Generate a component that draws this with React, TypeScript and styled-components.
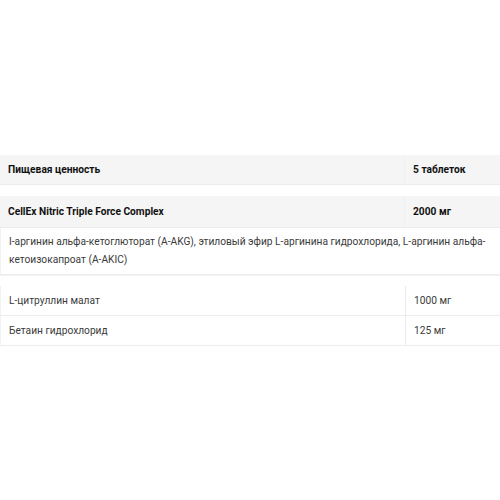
import React from 'react';
import styled, { createGlobalStyle } from 'styled-components';

const GlobalStyle = createGlobalStyle`
  html, body {
    margin: 0;
    padding: 0;
    background: #ffffff;
  }
  body {
    font-family: Roboto, "Noto Sans", sans-serif;
    color: #111;
  }
`;

const Page = styled.div`
  width: 500px;
  padding-top: 155px;
  display: flex;
  flex-direction: column;
`;

const Table = styled.div<{ $gap?: number }>`
  display: flex;
  flex-direction: column;
  margin-top: ${(p) => p.$gap ?? 0}px;
`;

const Row = styled.div<{ $shaded?: boolean; $height: number }>`
  display: flex;
  min-height: ${(p) => p.$height}px;
  background: ${(p) => (p.$shaded ? '#f5f5f5' : '#ffffff')};
  border-bottom: 1px solid #ececec;
  border-left: 1px solid #f2f2f2;
`;

const Cell = styled.div<{ $bold?: boolean; $wide?: boolean }>`
  box-sizing: border-box;
  display: flex;
  align-items: center;
  padding: 5px 8px;
  font-size: 10.2px;
  line-height: 18px;
  font-weight: ${(p) => (p.$bold ? 700 : 400)};
  color: ${(p) => (p.$bold ? '#111111' : '#3a3a3a')};
  width: ${(p) => (p.$wide ? '100%' : 'auto')};
  &:first-child {
    width: ${(p) => (p.$wide ? '100%' : '404px')};
    flex-shrink: 0;
  }
  & + & {
    flex: 1;
    border-left: 1px solid #ececec;
  }
`;

const HeadRow = styled(Row)`
  border-left: none;
  ${Cell} + ${Cell} {
    border-left: 1px solid #f0f0f0;
  }
`;

const Divider = styled.div`
  height: 10px;
  border-top: 1px solid #f3f3f3;
`;

export default function App() {
  return (
    <>
      <GlobalStyle />
      <Page>
        <HeadRow $shaded $height={29}>
          <Cell $bold>Пищевая ценность</Cell>
          <Cell $bold>5 таблеток</Cell>
        </HeadRow>
        <Table $gap={11}>
          <HeadRow $shaded $height={31}>
            <Cell $bold>CellEx Nitric Triple Force Complex</Cell>
            <Cell $bold>2000 мг</Cell>
          </HeadRow>
          <Row $height={45}>
            <Cell $wide>
              I-аргинин альфа-кетоглюторат (A-AKG), этиловый эфир L-аргинина гидрохлорида, L-аргинин альфа-кетоизокапроат (A-AKIC)
            </Cell>
          </Row>
        </Table>
        <Divider />
        <Table>
          <Row $height={29}>
            <Cell>L-цитруллин малат</Cell>
            <Cell>1000 мг</Cell>
          </Row>
          <Row $height={29}>
            <Cell>Бетаин гидрохлорид</Cell>
            <Cell>125 мг</Cell>
          </Row>
        </Table>
      </Page>
    </>
  );
}
